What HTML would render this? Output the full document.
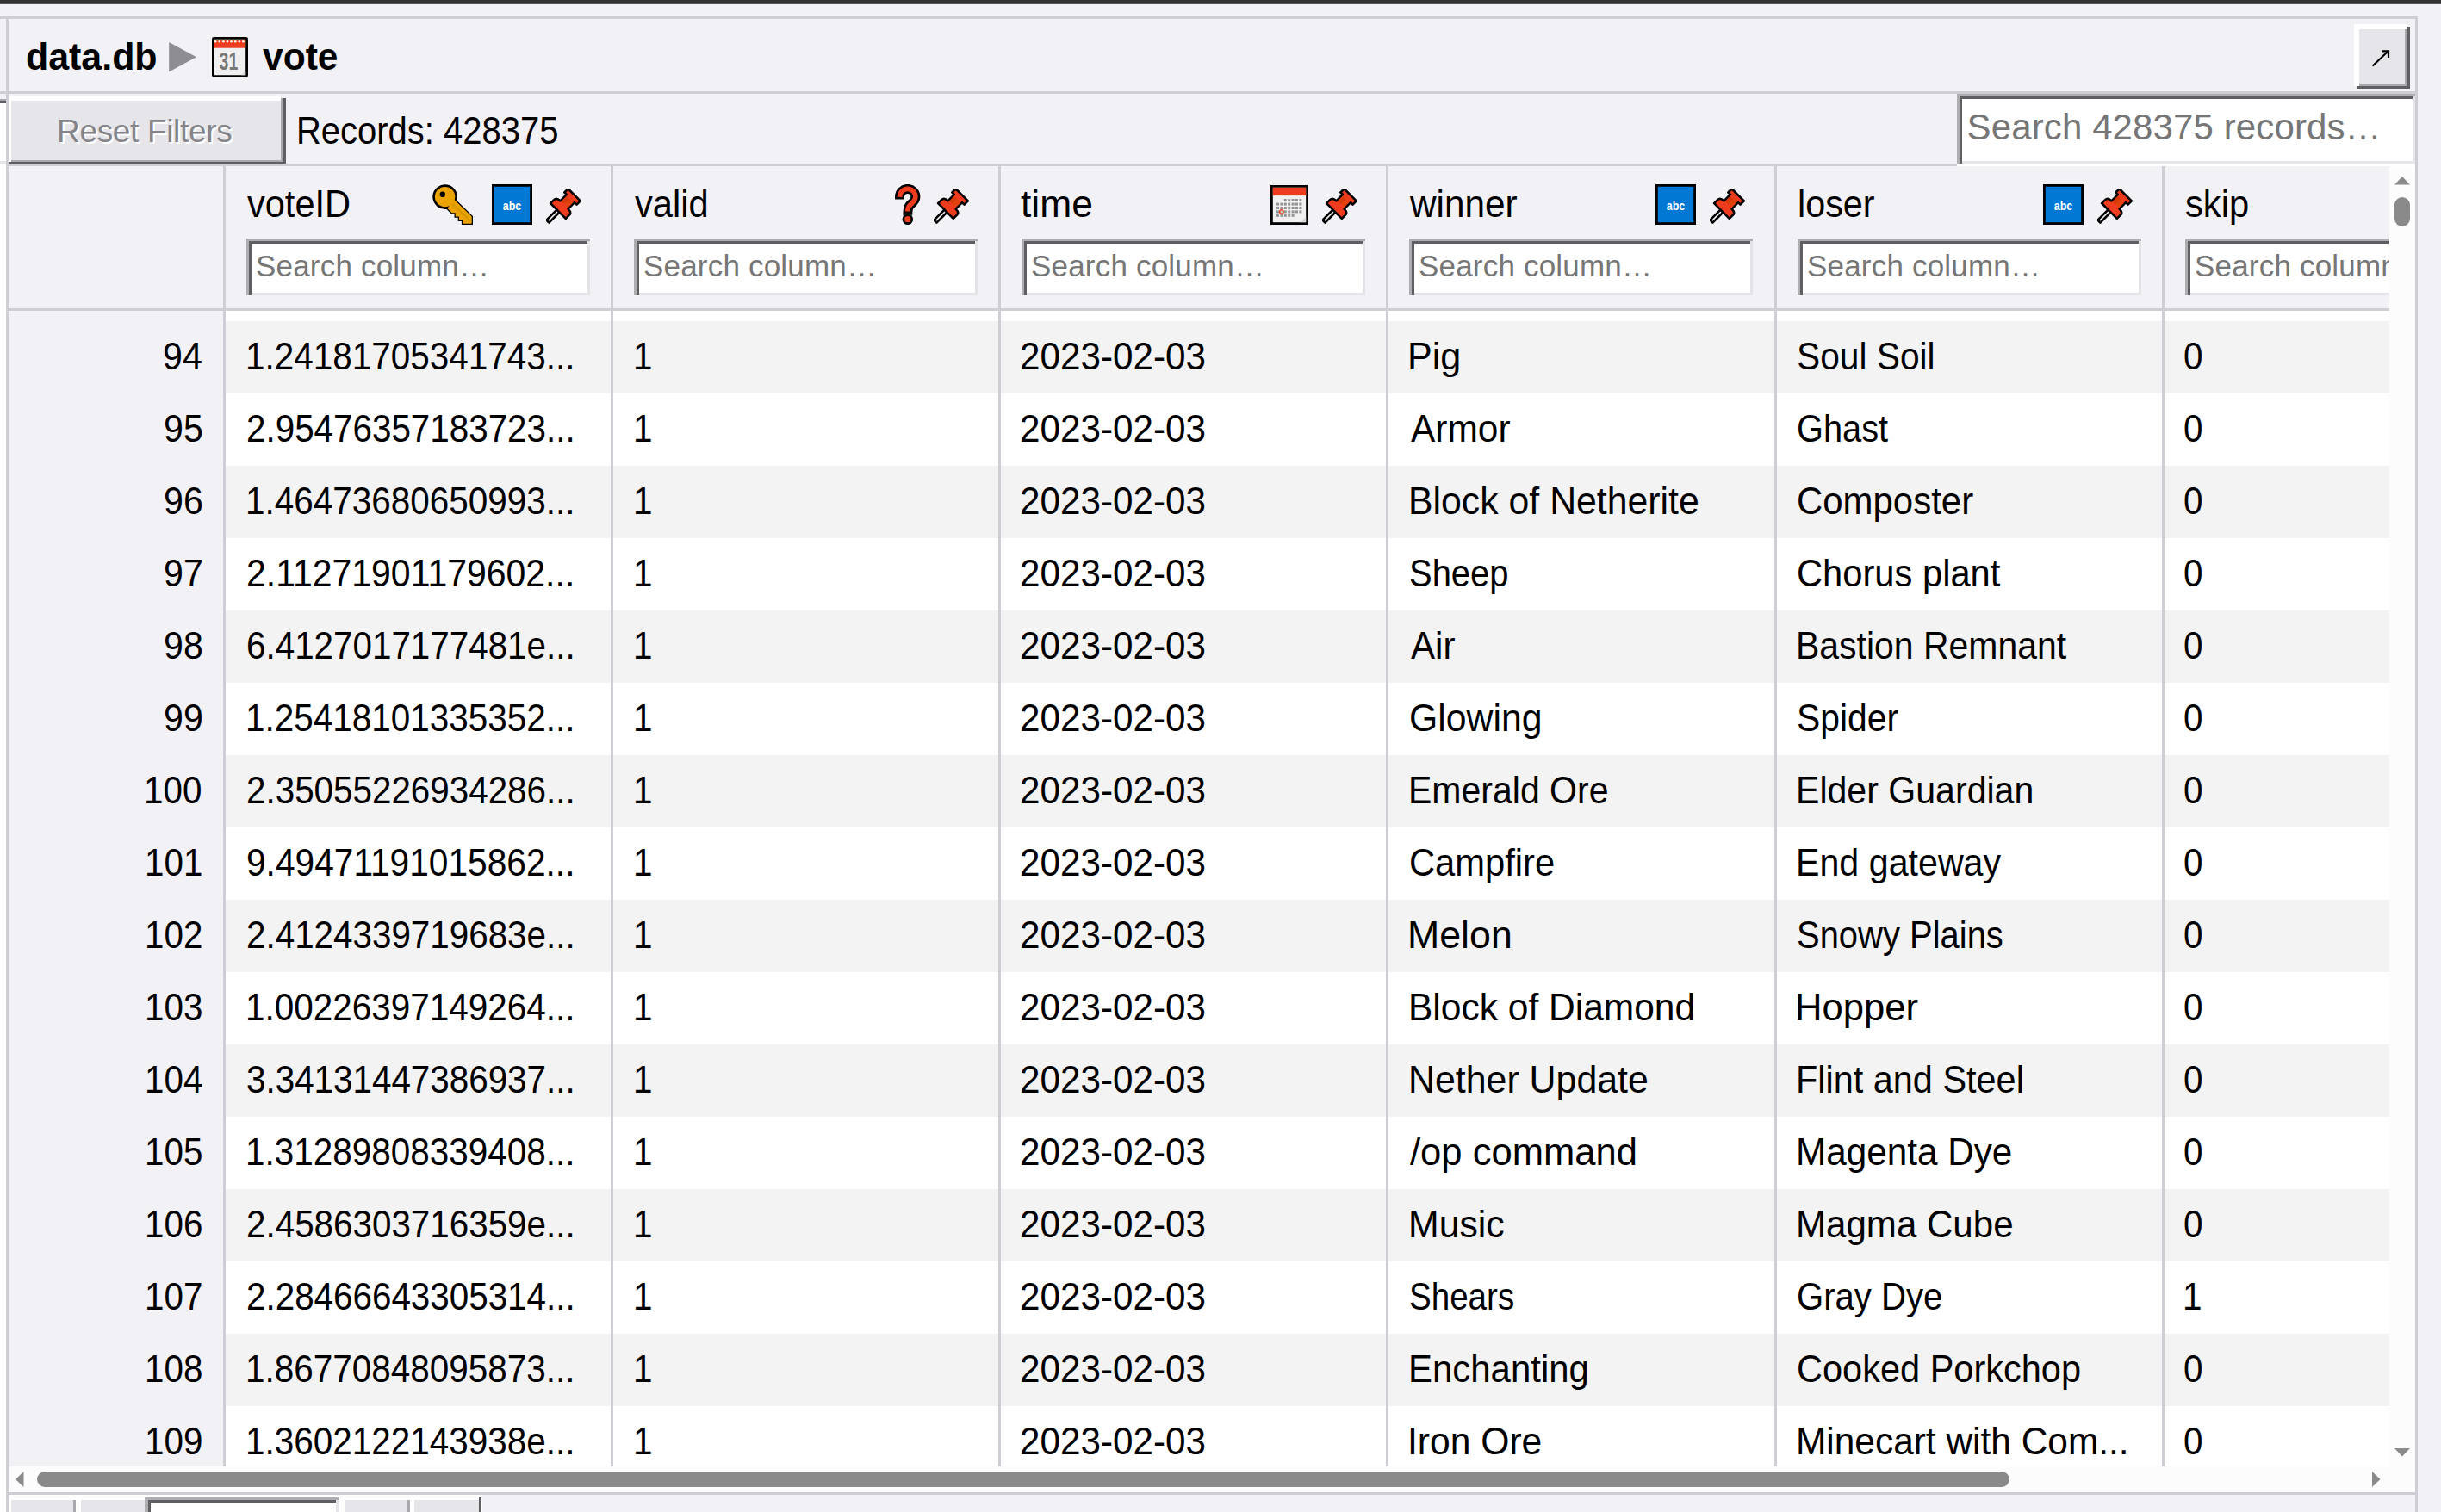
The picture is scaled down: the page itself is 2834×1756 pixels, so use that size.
<!DOCTYPE html>
<html><head><meta charset="utf-8"><title>vote</title>
<style>
html,body{margin:0;padding:0;}
body{width:2834px;height:1756px;overflow:hidden;background:#f2f1f6;position:relative;font-family:"Liberation Sans", sans-serif;}
body div{position:absolute;}
.t{white-space:pre;}
svg{display:block;}
</style></head><body>
<div style="left:0px;top:0px;width:2834px;height:4px;background:#333333;"></div>
<div style="left:0px;top:4px;width:2834px;height:1px;background:#5a5a5a;"></div>
<div style="left:0px;top:115px;width:7px;height:2px;background:#a9a8ad;"></div>
<div style="left:0px;top:117px;width:7px;height:3px;background:#5f5e63;"></div>
<div style="left:0px;top:120px;width:7px;height:1636px;background:#ffffff;"></div>
<div style="left:0px;top:187px;width:7px;height:3px;background:#e6e5ea;"></div>
<div style="left:0px;top:19px;width:2807px;height:3px;background:#cfced4;"></div>
<div style="left:7px;top:22px;width:3px;height:1734px;background:#cfced4;"></div>
<div style="left:2804px;top:19px;width:3px;height:1737px;background:#cfced4;"></div>
<div style="left:0px;top:106px;width:2804px;height:3px;background:#cfced4;"></div>
<div class="t" style="left:29.8px;top:44px;font-size:44px;line-height:44px;font-weight:700;color:#000;transform:scaleX(0.9752);transform-origin:0 0;">data.db</div>
<svg style="position:absolute;left:195px;top:48px" width="34" height="37" viewBox="0 0 34 37"><path d="M1.2 1 L33 18.3 L1.2 35.6 Z" fill="#8e8d93"/></svg>
<svg style="position:absolute;left:246px;top:43px" width="42" height="47" viewBox="0 0 42 47"><rect x="1.4" y="1.4" width="39.2" height="44.2" rx="1" fill="#f0f0f0" stroke="#000" stroke-width="2.8"/><rect x="2.8" y="3.4" width="36.4" height="9.3" fill="#f03c1e"/><circle cx="4.2" cy="5.2" r="1.3" fill="#fff"/><circle cx="8.8" cy="5.2" r="1.3" fill="#fff"/><circle cx="13.399999999999999" cy="5.2" r="1.3" fill="#fff"/><circle cx="18.0" cy="5.2" r="1.3" fill="#fff"/><circle cx="22.599999999999998" cy="5.2" r="1.3" fill="#fff"/><circle cx="27.2" cy="5.2" r="1.3" fill="#fff"/><circle cx="31.799999999999997" cy="5.2" r="1.3" fill="#fff"/><circle cx="36.4" cy="5.2" r="1.3" fill="#fff"/><text x="8.6" y="38.4" font-family="Liberation Sans" font-weight="700" font-size="29" fill="#787878" textLength="21.6" lengthAdjust="spacingAndGlyphs">31</text><path d="M39.2 39 L34 44.2 H39.2 Z" fill="#d8d8d8"/></svg>
<div class="t" style="left:304.8px;top:44px;font-size:44px;line-height:44px;font-weight:700;color:#000;transform:scaleX(0.9674);transform-origin:0 0;">vote</div>
<div style="left:2733px;top:28px;width:62px;height:72px;background:#ffffff;"></div>
<div style="left:2739px;top:34px;width:53px;height:63px;background:#e6e5ea;"></div>
<div style="left:2792px;top:34px;width:3px;height:66px;background:#a9a8ad;"></div>
<div style="left:2739px;top:97px;width:56px;height:3px;background:#a9a8ad;"></div>
<div style="left:2795px;top:31px;width:3px;height:72px;background:#5f5e63;"></div>
<div style="left:2736px;top:100px;width:62px;height:3px;background:#5f5e63;"></div>
<svg style="position:absolute;left:2750px;top:55px" width="28" height="26" viewBox="0 0 28 26"><path d="M5.2 21 L22.3 4.8" stroke="#000" stroke-width="2.2" stroke-linecap="round"/><path d="M15.5 4.3 H23 V12" fill="none" stroke="#000" stroke-width="2.2"/></svg>
<div style="left:10px;top:109px;width:2262px;height:81px;background:#f2f1f6;"></div>
<div style="left:10px;top:111px;width:316px;height:6px;background:#ffffff;"></div>
<div style="left:10px;top:111px;width:3px;height:79px;background:#ffffff;"></div>
<div style="left:13px;top:117px;width:313px;height:69px;background:#e6e5ea;"></div>
<div style="left:326px;top:114px;width:3px;height:75px;background:#a9a8ad;"></div>
<div style="left:13px;top:186px;width:316px;height:3px;background:#a9a8ad;"></div>
<div style="left:329px;top:114px;width:3px;height:77px;background:#5f5e63;"></div>
<div style="left:10px;top:188px;width:322px;height:3px;background:#5f5e63;"></div>
<div class="t" style="left:66.0px;top:134px;font-size:37px;line-height:37px;font-weight:400;color:#858589;letter-spacing:-0.333px;text-shadow:2.2px 2.2px 0 #ffffff;">Reset Filters</div>
<div class="t" style="left:343.7px;top:130px;font-size:44px;line-height:44px;font-weight:400;color:#000;transform:scaleX(0.9082);transform-origin:0 0;">Records: 428375</div>
<div style="left:2272px;top:109px;width:532px;height:81px;background:#aeadb2;"></div>
<div style="left:2275px;top:112px;width:529px;height:78px;background:#5f5e63;"></div>
<div style="left:2278px;top:115px;width:523px;height:72px;background:#ffffff;"></div>
<div style="left:2278px;top:187px;width:526px;height:3px;background:#e6e5ea;"></div>
<div style="left:2801px;top:112px;width:3px;height:78px;background:#e6e5ea;"></div>
<div style="left:2272px;top:190px;width:532px;height:3px;background:#ffffff;"></div>
<div class="t" style="left:2283.6px;top:127px;font-size:42px;line-height:42px;font-weight:400;color:#767676;letter-spacing:0.114px;">Search 428375 records…</div>
<div style="left:10px;top:190px;width:2262px;height:3px;background:#cfced4;"></div>
<div style="left:10px;top:193px;width:2764px;height:1510px;overflow:hidden;background:#fff">
<div style="left:0px;top:0px;width:2764px;height:165px;background:#f2f1f6;"></div>
<div style="left:0px;top:165px;width:2764px;height:3px;background:#cfced4;"></div>
<div style="left:0px;top:168px;width:2764px;height:12px;background:#ffffff;"></div>
<div style="left:0px;top:180px;width:2764px;height:84px;background:#f3f3f3;"></div>
<div style="left:0px;top:264px;width:2764px;height:84px;background:#ffffff;"></div>
<div style="left:0px;top:348px;width:2764px;height:84px;background:#f3f3f3;"></div>
<div style="left:0px;top:432px;width:2764px;height:84px;background:#ffffff;"></div>
<div style="left:0px;top:516px;width:2764px;height:84px;background:#f3f3f3;"></div>
<div style="left:0px;top:600px;width:2764px;height:84px;background:#ffffff;"></div>
<div style="left:0px;top:684px;width:2764px;height:84px;background:#f3f3f3;"></div>
<div style="left:0px;top:768px;width:2764px;height:84px;background:#ffffff;"></div>
<div style="left:0px;top:852px;width:2764px;height:84px;background:#f3f3f3;"></div>
<div style="left:0px;top:936px;width:2764px;height:84px;background:#ffffff;"></div>
<div style="left:0px;top:1020px;width:2764px;height:84px;background:#f3f3f3;"></div>
<div style="left:0px;top:1104px;width:2764px;height:84px;background:#ffffff;"></div>
<div style="left:0px;top:1188px;width:2764px;height:84px;background:#f3f3f3;"></div>
<div style="left:0px;top:1272px;width:2764px;height:84px;background:#ffffff;"></div>
<div style="left:0px;top:1356px;width:2764px;height:84px;background:#f3f3f3;"></div>
<div style="left:0px;top:1440px;width:2764px;height:84px;background:#ffffff;"></div>
<div style="left:0px;top:168px;width:249px;height:1342px;background:#f2f1f6;"></div>
<div style="left:249px;top:0px;width:3px;height:1510px;background:#cfced4;"></div>
<div style="left:699px;top:0px;width:3px;height:1510px;background:#cfced4;"></div>
<div style="left:1149px;top:0px;width:3px;height:1510px;background:#cfced4;"></div>
<div style="left:1599px;top:0px;width:3px;height:1510px;background:#cfced4;"></div>
<div style="left:2050px;top:0px;width:3px;height:1510px;background:#cfced4;"></div>
<div style="left:2500px;top:0px;width:3px;height:1510px;background:#cfced4;"></div>
<div class="t" style="left:179.0px;top:199px;font-size:44px;line-height:44px;font-weight:400;color:#000;transform:scaleX(0.9348);transform-origin:0 0;">94</div>
<div class="t" style="left:274.8px;top:199px;font-size:44px;line-height:44px;font-weight:400;color:#000;transform:scaleX(0.9198);transform-origin:0 0;">1.24181705341743...</div>
<div class="t" style="left:724.7px;top:199px;font-size:44px;line-height:44px;font-weight:400;color:#000;transform:scaleX(0.92);transform-origin:0 0;">1</div>
<div class="t" style="left:1174.0px;top:199px;font-size:44px;line-height:44px;font-weight:400;color:#000;transform:scaleX(0.9593);transform-origin:0 0;">2023-02-03</div>
<div class="t" style="left:1624.3px;top:199px;font-size:44px;line-height:44px;font-weight:400;color:#000;transform:scaleX(0.9807);transform-origin:0 0;">Pig</div>
<div class="t" style="left:2076.3px;top:199px;font-size:44px;line-height:44px;font-weight:400;color:#000;transform:scaleX(0.9249);transform-origin:0 0;">Soul Soil</div>
<div class="t" style="left:2524.8px;top:199px;font-size:44px;line-height:44px;font-weight:400;color:#000;transform:scaleX(0.92);transform-origin:0 0;">0</div>
<div class="t" style="left:180.0px;top:283px;font-size:44px;line-height:44px;font-weight:400;color:#000;transform:scaleX(0.9348);transform-origin:0 0;">95</div>
<div class="t" style="left:275.8px;top:283px;font-size:44px;line-height:44px;font-weight:400;color:#000;transform:scaleX(0.9176);transform-origin:0 0;">2.95476357183723...</div>
<div class="t" style="left:724.7px;top:283px;font-size:44px;line-height:44px;font-weight:400;color:#000;transform:scaleX(0.92);transform-origin:0 0;">1</div>
<div class="t" style="left:1174.0px;top:283px;font-size:44px;line-height:44px;font-weight:400;color:#000;transform:scaleX(0.9593);transform-origin:0 0;">2023-02-03</div>
<div class="t" style="left:1628.3px;top:283px;font-size:44px;line-height:44px;font-weight:400;color:#000;transform:scaleX(0.9647);transform-origin:0 0;">Armor</div>
<div class="t" style="left:2076.3px;top:283px;font-size:44px;line-height:44px;font-weight:400;color:#000;transform:scaleX(0.9035);transform-origin:0 0;">Ghast</div>
<div class="t" style="left:2524.8px;top:283px;font-size:44px;line-height:44px;font-weight:400;color:#000;transform:scaleX(0.92);transform-origin:0 0;">0</div>
<div class="t" style="left:180.0px;top:367px;font-size:44px;line-height:44px;font-weight:400;color:#000;transform:scaleX(0.9348);transform-origin:0 0;">96</div>
<div class="t" style="left:274.8px;top:367px;font-size:44px;line-height:44px;font-weight:400;color:#000;transform:scaleX(0.9198);transform-origin:0 0;">1.46473680650993...</div>
<div class="t" style="left:724.7px;top:367px;font-size:44px;line-height:44px;font-weight:400;color:#000;transform:scaleX(0.92);transform-origin:0 0;">1</div>
<div class="t" style="left:1174.0px;top:367px;font-size:44px;line-height:44px;font-weight:400;color:#000;transform:scaleX(0.9593);transform-origin:0 0;">2023-02-03</div>
<div class="t" style="left:1625.3px;top:367px;font-size:44px;line-height:44px;font-weight:400;color:#000;transform:scaleX(0.9727);transform-origin:0 0;">Block of Netherite</div>
<div class="t" style="left:2076.3px;top:367px;font-size:44px;line-height:44px;font-weight:400;color:#000;transform:scaleX(0.9531);transform-origin:0 0;">Composter</div>
<div class="t" style="left:2524.8px;top:367px;font-size:44px;line-height:44px;font-weight:400;color:#000;transform:scaleX(0.92);transform-origin:0 0;">0</div>
<div class="t" style="left:180.0px;top:451px;font-size:44px;line-height:44px;font-weight:400;color:#000;transform:scaleX(0.9348);transform-origin:0 0;">97</div>
<div class="t" style="left:275.8px;top:451px;font-size:44px;line-height:44px;font-weight:400;color:#000;transform:scaleX(0.9312);transform-origin:0 0;">2.11271901179602...</div>
<div class="t" style="left:724.7px;top:451px;font-size:44px;line-height:44px;font-weight:400;color:#000;transform:scaleX(0.92);transform-origin:0 0;">1</div>
<div class="t" style="left:1174.0px;top:451px;font-size:44px;line-height:44px;font-weight:400;color:#000;transform:scaleX(0.9593);transform-origin:0 0;">2023-02-03</div>
<div class="t" style="left:1626.3px;top:451px;font-size:44px;line-height:44px;font-weight:400;color:#000;transform:scaleX(0.9081);transform-origin:0 0;">Sheep</div>
<div class="t" style="left:2076.3px;top:451px;font-size:44px;line-height:44px;font-weight:400;color:#000;transform:scaleX(0.9474);transform-origin:0 0;">Chorus plant</div>
<div class="t" style="left:2524.8px;top:451px;font-size:44px;line-height:44px;font-weight:400;color:#000;transform:scaleX(0.92);transform-origin:0 0;">0</div>
<div class="t" style="left:180.0px;top:535px;font-size:44px;line-height:44px;font-weight:400;color:#000;transform:scaleX(0.9348);transform-origin:0 0;">98</div>
<div class="t" style="left:275.8px;top:535px;font-size:44px;line-height:44px;font-weight:400;color:#000;transform:scaleX(0.9176);transform-origin:0 0;">6.4127017177481e...</div>
<div class="t" style="left:724.7px;top:535px;font-size:44px;line-height:44px;font-weight:400;color:#000;transform:scaleX(0.92);transform-origin:0 0;">1</div>
<div class="t" style="left:1174.0px;top:535px;font-size:44px;line-height:44px;font-weight:400;color:#000;transform:scaleX(0.9593);transform-origin:0 0;">2023-02-03</div>
<div class="t" style="left:1628.3px;top:535px;font-size:44px;line-height:44px;font-weight:400;color:#000;transform:scaleX(0.9566);transform-origin:0 0;">Air</div>
<div class="t" style="left:2075.3px;top:535px;font-size:44px;line-height:44px;font-weight:400;color:#000;transform:scaleX(0.9306);transform-origin:0 0;">Bastion Remnant</div>
<div class="t" style="left:2524.8px;top:535px;font-size:44px;line-height:44px;font-weight:400;color:#000;transform:scaleX(0.92);transform-origin:0 0;">0</div>
<div class="t" style="left:180.0px;top:619px;font-size:44px;line-height:44px;font-weight:400;color:#000;transform:scaleX(0.9348);transform-origin:0 0;">99</div>
<div class="t" style="left:274.8px;top:619px;font-size:44px;line-height:44px;font-weight:400;color:#000;transform:scaleX(0.9198);transform-origin:0 0;">1.25418101335352...</div>
<div class="t" style="left:724.7px;top:619px;font-size:44px;line-height:44px;font-weight:400;color:#000;transform:scaleX(0.92);transform-origin:0 0;">1</div>
<div class="t" style="left:1174.0px;top:619px;font-size:44px;line-height:44px;font-weight:400;color:#000;transform:scaleX(0.9593);transform-origin:0 0;">2023-02-03</div>
<div class="t" style="left:1626.3px;top:619px;font-size:44px;line-height:44px;font-weight:400;color:#000;transform:scaleX(0.9721);transform-origin:0 0;">Glowing</div>
<div class="t" style="left:2076.3px;top:619px;font-size:44px;line-height:44px;font-weight:400;color:#000;transform:scaleX(0.9288);transform-origin:0 0;">Spider</div>
<div class="t" style="left:2524.8px;top:619px;font-size:44px;line-height:44px;font-weight:400;color:#000;transform:scaleX(0.92);transform-origin:0 0;">0</div>
<div class="t" style="left:157.0px;top:703px;font-size:44px;line-height:44px;font-weight:400;color:#000;transform:scaleX(0.9174);transform-origin:0 0;">100</div>
<div class="t" style="left:275.8px;top:703px;font-size:44px;line-height:44px;font-weight:400;color:#000;transform:scaleX(0.9176);transform-origin:0 0;">2.35055226934286...</div>
<div class="t" style="left:724.7px;top:703px;font-size:44px;line-height:44px;font-weight:400;color:#000;transform:scaleX(0.92);transform-origin:0 0;">1</div>
<div class="t" style="left:1174.0px;top:703px;font-size:44px;line-height:44px;font-weight:400;color:#000;transform:scaleX(0.9593);transform-origin:0 0;">2023-02-03</div>
<div class="t" style="left:1625.3px;top:703px;font-size:44px;line-height:44px;font-weight:400;color:#000;transform:scaleX(0.932);transform-origin:0 0;">Emerald Ore</div>
<div class="t" style="left:2075.3px;top:703px;font-size:44px;line-height:44px;font-weight:400;color:#000;transform:scaleX(0.9336);transform-origin:0 0;">Elder Guardian</div>
<div class="t" style="left:2524.8px;top:703px;font-size:44px;line-height:44px;font-weight:400;color:#000;transform:scaleX(0.92);transform-origin:0 0;">0</div>
<div class="t" style="left:158.0px;top:787px;font-size:44px;line-height:44px;font-weight:400;color:#000;transform:scaleX(0.9174);transform-origin:0 0;">101</div>
<div class="t" style="left:275.8px;top:787px;font-size:44px;line-height:44px;font-weight:400;color:#000;transform:scaleX(0.9243);transform-origin:0 0;">9.49471191015862...</div>
<div class="t" style="left:724.7px;top:787px;font-size:44px;line-height:44px;font-weight:400;color:#000;transform:scaleX(0.92);transform-origin:0 0;">1</div>
<div class="t" style="left:1174.0px;top:787px;font-size:44px;line-height:44px;font-weight:400;color:#000;transform:scaleX(0.9593);transform-origin:0 0;">2023-02-03</div>
<div class="t" style="left:1626.3px;top:787px;font-size:44px;line-height:44px;font-weight:400;color:#000;transform:scaleX(0.948);transform-origin:0 0;">Campfire</div>
<div class="t" style="left:2075.3px;top:787px;font-size:44px;line-height:44px;font-weight:400;color:#000;transform:scaleX(0.936);transform-origin:0 0;">End gateway</div>
<div class="t" style="left:2524.8px;top:787px;font-size:44px;line-height:44px;font-weight:400;color:#000;transform:scaleX(0.92);transform-origin:0 0;">0</div>
<div class="t" style="left:158.0px;top:871px;font-size:44px;line-height:44px;font-weight:400;color:#000;transform:scaleX(0.9174);transform-origin:0 0;">102</div>
<div class="t" style="left:275.8px;top:871px;font-size:44px;line-height:44px;font-weight:400;color:#000;transform:scaleX(0.9176);transform-origin:0 0;">2.4124339719683e...</div>
<div class="t" style="left:724.7px;top:871px;font-size:44px;line-height:44px;font-weight:400;color:#000;transform:scaleX(0.92);transform-origin:0 0;">1</div>
<div class="t" style="left:1174.0px;top:871px;font-size:44px;line-height:44px;font-weight:400;color:#000;transform:scaleX(0.9593);transform-origin:0 0;">2023-02-03</div>
<div class="t" style="left:1624.3px;top:871px;font-size:44px;line-height:44px;font-weight:400;color:#000;transform:scaleX(1.0159);transform-origin:0 0;">Melon</div>
<div class="t" style="left:2076.3px;top:871px;font-size:44px;line-height:44px;font-weight:400;color:#000;transform:scaleX(0.908);transform-origin:0 0;">Snowy Plains</div>
<div class="t" style="left:2524.8px;top:871px;font-size:44px;line-height:44px;font-weight:400;color:#000;transform:scaleX(0.92);transform-origin:0 0;">0</div>
<div class="t" style="left:158.0px;top:955px;font-size:44px;line-height:44px;font-weight:400;color:#000;transform:scaleX(0.9174);transform-origin:0 0;">103</div>
<div class="t" style="left:274.8px;top:955px;font-size:44px;line-height:44px;font-weight:400;color:#000;transform:scaleX(0.9198);transform-origin:0 0;">1.00226397149264...</div>
<div class="t" style="left:724.7px;top:955px;font-size:44px;line-height:44px;font-weight:400;color:#000;transform:scaleX(0.92);transform-origin:0 0;">1</div>
<div class="t" style="left:1174.0px;top:955px;font-size:44px;line-height:44px;font-weight:400;color:#000;transform:scaleX(0.9593);transform-origin:0 0;">2023-02-03</div>
<div class="t" style="left:1625.3px;top:955px;font-size:44px;line-height:44px;font-weight:400;color:#000;transform:scaleX(0.966);transform-origin:0 0;">Block of Diamond</div>
<div class="t" style="left:2074.3px;top:955px;font-size:44px;line-height:44px;font-weight:400;color:#000;transform:scaleX(0.9914);transform-origin:0 0;">Hopper</div>
<div class="t" style="left:2524.8px;top:955px;font-size:44px;line-height:44px;font-weight:400;color:#000;transform:scaleX(0.92);transform-origin:0 0;">0</div>
<div class="t" style="left:158.0px;top:1039px;font-size:44px;line-height:44px;font-weight:400;color:#000;transform:scaleX(0.9174);transform-origin:0 0;">104</div>
<div class="t" style="left:275.8px;top:1039px;font-size:44px;line-height:44px;font-weight:400;color:#000;transform:scaleX(0.9176);transform-origin:0 0;">3.34131447386937...</div>
<div class="t" style="left:724.7px;top:1039px;font-size:44px;line-height:44px;font-weight:400;color:#000;transform:scaleX(0.92);transform-origin:0 0;">1</div>
<div class="t" style="left:1174.0px;top:1039px;font-size:44px;line-height:44px;font-weight:400;color:#000;transform:scaleX(0.9593);transform-origin:0 0;">2023-02-03</div>
<div class="t" style="left:1625.3px;top:1039px;font-size:44px;line-height:44px;font-weight:400;color:#000;transform:scaleX(0.9743);transform-origin:0 0;">Nether Update</div>
<div class="t" style="left:2075.3px;top:1039px;font-size:44px;line-height:44px;font-weight:400;color:#000;transform:scaleX(0.9416);transform-origin:0 0;">Flint and Steel</div>
<div class="t" style="left:2524.8px;top:1039px;font-size:44px;line-height:44px;font-weight:400;color:#000;transform:scaleX(0.92);transform-origin:0 0;">0</div>
<div class="t" style="left:158.0px;top:1123px;font-size:44px;line-height:44px;font-weight:400;color:#000;transform:scaleX(0.9174);transform-origin:0 0;">105</div>
<div class="t" style="left:274.8px;top:1123px;font-size:44px;line-height:44px;font-weight:400;color:#000;transform:scaleX(0.9198);transform-origin:0 0;">1.31289808339408...</div>
<div class="t" style="left:724.7px;top:1123px;font-size:44px;line-height:44px;font-weight:400;color:#000;transform:scaleX(0.92);transform-origin:0 0;">1</div>
<div class="t" style="left:1174.0px;top:1123px;font-size:44px;line-height:44px;font-weight:400;color:#000;transform:scaleX(0.9593);transform-origin:0 0;">2023-02-03</div>
<div class="t" style="left:1626.6px;top:1123px;font-size:44px;line-height:44px;font-weight:400;color:#000;transform:scaleX(0.9902);transform-origin:0 0;">/op command</div>
<div class="t" style="left:2075.3px;top:1123px;font-size:44px;line-height:44px;font-weight:400;color:#000;transform:scaleX(0.9602);transform-origin:0 0;">Magenta Dye</div>
<div class="t" style="left:2524.8px;top:1123px;font-size:44px;line-height:44px;font-weight:400;color:#000;transform:scaleX(0.92);transform-origin:0 0;">0</div>
<div class="t" style="left:158.0px;top:1207px;font-size:44px;line-height:44px;font-weight:400;color:#000;transform:scaleX(0.9174);transform-origin:0 0;">106</div>
<div class="t" style="left:275.8px;top:1207px;font-size:44px;line-height:44px;font-weight:400;color:#000;transform:scaleX(0.9176);transform-origin:0 0;">2.4586303716359e...</div>
<div class="t" style="left:724.7px;top:1207px;font-size:44px;line-height:44px;font-weight:400;color:#000;transform:scaleX(0.92);transform-origin:0 0;">1</div>
<div class="t" style="left:1174.0px;top:1207px;font-size:44px;line-height:44px;font-weight:400;color:#000;transform:scaleX(0.9593);transform-origin:0 0;">2023-02-03</div>
<div class="t" style="left:1625.3px;top:1207px;font-size:44px;line-height:44px;font-weight:400;color:#000;transform:scaleX(0.9727);transform-origin:0 0;">Music</div>
<div class="t" style="left:2075.3px;top:1207px;font-size:44px;line-height:44px;font-weight:400;color:#000;transform:scaleX(0.9562);transform-origin:0 0;">Magma Cube</div>
<div class="t" style="left:2524.8px;top:1207px;font-size:44px;line-height:44px;font-weight:400;color:#000;transform:scaleX(0.92);transform-origin:0 0;">0</div>
<div class="t" style="left:158.0px;top:1291px;font-size:44px;line-height:44px;font-weight:400;color:#000;transform:scaleX(0.9174);transform-origin:0 0;">107</div>
<div class="t" style="left:275.8px;top:1291px;font-size:44px;line-height:44px;font-weight:400;color:#000;transform:scaleX(0.9176);transform-origin:0 0;">2.28466643305314...</div>
<div class="t" style="left:724.7px;top:1291px;font-size:44px;line-height:44px;font-weight:400;color:#000;transform:scaleX(0.92);transform-origin:0 0;">1</div>
<div class="t" style="left:1174.0px;top:1291px;font-size:44px;line-height:44px;font-weight:400;color:#000;transform:scaleX(0.9593);transform-origin:0 0;">2023-02-03</div>
<div class="t" style="left:1626.3px;top:1291px;font-size:44px;line-height:44px;font-weight:400;color:#000;transform:scaleX(0.8765);transform-origin:0 0;">Shears</div>
<div class="t" style="left:2076.3px;top:1291px;font-size:44px;line-height:44px;font-weight:400;color:#000;transform:scaleX(0.9115);transform-origin:0 0;">Gray Dye</div>
<div class="t" style="left:2523.5px;top:1291px;font-size:44px;line-height:44px;font-weight:400;color:#000;transform:scaleX(0.92);transform-origin:0 0;">1</div>
<div class="t" style="left:158.0px;top:1375px;font-size:44px;line-height:44px;font-weight:400;color:#000;transform:scaleX(0.9174);transform-origin:0 0;">108</div>
<div class="t" style="left:274.8px;top:1375px;font-size:44px;line-height:44px;font-weight:400;color:#000;transform:scaleX(0.9198);transform-origin:0 0;">1.86770848095873...</div>
<div class="t" style="left:724.7px;top:1375px;font-size:44px;line-height:44px;font-weight:400;color:#000;transform:scaleX(0.92);transform-origin:0 0;">1</div>
<div class="t" style="left:1174.0px;top:1375px;font-size:44px;line-height:44px;font-weight:400;color:#000;transform:scaleX(0.9593);transform-origin:0 0;">2023-02-03</div>
<div class="t" style="left:1625.3px;top:1375px;font-size:44px;line-height:44px;font-weight:400;color:#000;transform:scaleX(0.9531);transform-origin:0 0;">Enchanting</div>
<div class="t" style="left:2076.3px;top:1375px;font-size:44px;line-height:44px;font-weight:400;color:#000;transform:scaleX(0.9436);transform-origin:0 0;">Cooked Porkchop</div>
<div class="t" style="left:2524.8px;top:1375px;font-size:44px;line-height:44px;font-weight:400;color:#000;transform:scaleX(0.92);transform-origin:0 0;">0</div>
<div class="t" style="left:158.0px;top:1459px;font-size:44px;line-height:44px;font-weight:400;color:#000;transform:scaleX(0.9174);transform-origin:0 0;">109</div>
<div class="t" style="left:274.8px;top:1459px;font-size:44px;line-height:44px;font-weight:400;color:#000;transform:scaleX(0.9198);transform-origin:0 0;">1.3602122143938e...</div>
<div class="t" style="left:724.7px;top:1459px;font-size:44px;line-height:44px;font-weight:400;color:#000;transform:scaleX(0.92);transform-origin:0 0;">1</div>
<div class="t" style="left:1174.0px;top:1459px;font-size:44px;line-height:44px;font-weight:400;color:#000;transform:scaleX(0.9593);transform-origin:0 0;">2023-02-03</div>
<div class="t" style="left:1624.3px;top:1459px;font-size:44px;line-height:44px;font-weight:400;color:#000;transform:scaleX(0.9686);transform-origin:0 0;">Iron Ore</div>
<div class="t" style="left:2075.3px;top:1459px;font-size:44px;line-height:44px;font-weight:400;color:#000;transform:scaleX(0.9641);transform-origin:0 0;">Minecart with Com...</div>
<div class="t" style="left:2524.8px;top:1459px;font-size:44px;line-height:44px;font-weight:400;color:#000;transform:scaleX(0.92);transform-origin:0 0;">0</div>
<div class="t" style="left:277.0px;top:22px;font-size:44px;line-height:44px;font-weight:400;color:#000;transform:scaleX(0.944);transform-origin:0 0;">voteID</div>
<div style="left:276px;top:84px;width:399px;height:66px;background:#aeadb2;"></div>
<div style="left:279px;top:87px;width:396px;height:63px;background:#5f5e63;"></div>
<div style="left:282px;top:90px;width:390px;height:57px;background:#ffffff;"></div>
<div style="left:282px;top:147px;width:393px;height:3px;background:#e3e2e7;"></div>
<div style="left:672px;top:87px;width:3px;height:63px;background:#e3e2e7;"></div>
<div class="t" style="left:287.0px;top:98px;font-size:35px;line-height:35px;font-weight:400;color:#767676;letter-spacing:0.192px;">Search column…</div>
<div class="t" style="left:726.7px;top:22px;font-size:44px;line-height:44px;font-weight:400;color:#000;transform:scaleX(0.9466);transform-origin:0 0;">valid</div>
<div style="left:726px;top:84px;width:399px;height:66px;background:#aeadb2;"></div>
<div style="left:729px;top:87px;width:396px;height:63px;background:#5f5e63;"></div>
<div style="left:732px;top:90px;width:390px;height:57px;background:#ffffff;"></div>
<div style="left:732px;top:147px;width:393px;height:3px;background:#e3e2e7;"></div>
<div style="left:1122px;top:87px;width:3px;height:63px;background:#e3e2e7;"></div>
<div class="t" style="left:737.0px;top:98px;font-size:35px;line-height:35px;font-weight:400;color:#767676;letter-spacing:0.192px;">Search column…</div>
<div class="t" style="left:1175.4px;top:22px;font-size:44px;line-height:44px;font-weight:400;color:#000;transform:scaleX(1.0087);transform-origin:0 0;">time</div>
<div style="left:1176px;top:84px;width:399px;height:66px;background:#aeadb2;"></div>
<div style="left:1179px;top:87px;width:396px;height:63px;background:#5f5e63;"></div>
<div style="left:1182px;top:90px;width:390px;height:57px;background:#ffffff;"></div>
<div style="left:1182px;top:147px;width:393px;height:3px;background:#e3e2e7;"></div>
<div style="left:1572px;top:87px;width:3px;height:63px;background:#e3e2e7;"></div>
<div class="t" style="left:1187.0px;top:98px;font-size:35px;line-height:35px;font-weight:400;color:#767676;letter-spacing:0.192px;">Search column…</div>
<div class="t" style="left:1627.2px;top:22px;font-size:44px;line-height:44px;font-weight:400;color:#000;transform:scaleX(0.962);transform-origin:0 0;">winner</div>
<div style="left:1626px;top:84px;width:399px;height:66px;background:#aeadb2;"></div>
<div style="left:1629px;top:87px;width:396px;height:63px;background:#5f5e63;"></div>
<div style="left:1632px;top:90px;width:390px;height:57px;background:#ffffff;"></div>
<div style="left:1632px;top:147px;width:393px;height:3px;background:#e3e2e7;"></div>
<div style="left:2022px;top:87px;width:3px;height:63px;background:#e3e2e7;"></div>
<div class="t" style="left:1637.0px;top:98px;font-size:35px;line-height:35px;font-weight:400;color:#767676;letter-spacing:0.192px;">Search column…</div>
<div class="t" style="left:2076.7px;top:22px;font-size:44px;line-height:44px;font-weight:400;color:#000;transform:scaleX(0.9391);transform-origin:0 0;">loser</div>
<div style="left:2077px;top:84px;width:399px;height:66px;background:#aeadb2;"></div>
<div style="left:2080px;top:87px;width:396px;height:63px;background:#5f5e63;"></div>
<div style="left:2083px;top:90px;width:390px;height:57px;background:#ffffff;"></div>
<div style="left:2083px;top:147px;width:393px;height:3px;background:#e3e2e7;"></div>
<div style="left:2473px;top:87px;width:3px;height:63px;background:#e3e2e7;"></div>
<div class="t" style="left:2088.0px;top:98px;font-size:35px;line-height:35px;font-weight:400;color:#767676;letter-spacing:0.192px;">Search column…</div>
<div class="t" style="left:2527.0px;top:22px;font-size:44px;line-height:44px;font-weight:400;color:#000;transform:scaleX(0.9467);transform-origin:0 0;">skip</div>
<div style="left:2527px;top:84px;width:399px;height:66px;background:#aeadb2;"></div>
<div style="left:2530px;top:87px;width:396px;height:63px;background:#5f5e63;"></div>
<div style="left:2533px;top:90px;width:390px;height:57px;background:#ffffff;"></div>
<div style="left:2533px;top:147px;width:393px;height:3px;background:#e3e2e7;"></div>
<div style="left:2923px;top:87px;width:3px;height:63px;background:#e3e2e7;"></div>
<div class="t" style="left:2538.0px;top:98px;font-size:35px;line-height:35px;font-weight:400;color:#767676;letter-spacing:0.192px;">Search column…</div>
</div>
<svg style="position:absolute;left:502px;top:214px" width="47" height="47" viewBox="0 0 47 47"><path d="M25 17.5 L45.7 37.5 V45.7 H35.2 V41.6 H31 V37.4 H26.8 V33.2 H22.6 L17.5 28 Z" fill="#000" stroke="#000" stroke-width="2.6" stroke-linejoin="miter"/><circle cx="14.6" cy="14.6" r="14.3" fill="#000"/><path d="M25 17.5 L45.7 37.5 V45.7 H35.2 V41.6 H31 V37.4 H26.8 V33.2 H22.6 L17.5 28 Z" fill="#eaa300"/><circle cx="14.6" cy="14.6" r="11.7" fill="#eaa300"/><path d="M24 22 L43.5 40.5 V44 L22 23.5 Z" fill="#cf9000" opacity="0.6"/><circle cx="11.8" cy="11.8" r="3.2" fill="#000"/></svg>
<svg style="position:absolute;left:571px;top:214px" width="47" height="47" viewBox="0 0 47 47"><rect x="1.4" y="1.4" width="44.2" height="44.2" fill="#0078d4" stroke="#000" stroke-width="2.8"/><text x="23.5" y="29.5" text-anchor="middle" font-family="Liberation Sans" font-weight="700" font-size="14.5" fill="#fff" textLength="21.5" lengthAdjust="spacingAndGlyphs">abc</text></svg>
<svg style="position:absolute;left:634px;top:219px" width="41" height="41" viewBox="0 0 41 41"><g transform="translate(17.5 22.5) rotate(45)" stroke="#000" stroke-width="2.6" stroke-linejoin="round"><rect x="-2.1" y="5" width="4.2" height="17" fill="#f4f4f4"/><path d="M-10 -21.5 H10 V-15.5 H6.5 V-5 Q12.5 -5 12.5 -1 V5 H-12.5 V-1 Q-12.5 -5 -6.5 -5 V-15.5 H-10 Z" fill="#f03c1e"/></g><g transform="translate(17.5 22.5) rotate(45)"><rect x="-5.2" y="-14.2" width="5" height="8" fill="#d43a0a"/><rect x="-0.2" y="-14.2" width="5.4" height="8" fill="#e2410f"/></g></svg>
<svg style="position:absolute;left:1039px;top:214px" width="30" height="47" viewBox="0 0 30 47"><path d="M5.5 17.4 V14.6 A9.2 9.2 0 0 1 23.9 14.6 C23.9 19.8 20 21.6 17.6 24 C15.6 26 14.8 28 14.8 35.8" fill="none" stroke="#000" stroke-width="11"/><path d="M5.5 14.8 V14.6 A9.2 9.2 0 0 1 23.9 14.6 C23.9 19.8 20 21.6 17.6 24 C15.6 26 14.8 28 14.8 31.5" fill="none" stroke="#f03c1e" stroke-width="5.6"/><rect x="5.5" y="14" width="2.9" height="0.9" fill="#f03c1e"/><circle cx="14.8" cy="40.7" r="6.3" fill="#000"/><circle cx="14.8" cy="40.7" r="3.6" fill="#f03c1e"/></svg>
<svg style="position:absolute;left:1084px;top:219px" width="41" height="41" viewBox="0 0 41 41"><g transform="translate(17.5 22.5) rotate(45)" stroke="#000" stroke-width="2.6" stroke-linejoin="round"><rect x="-2.1" y="5" width="4.2" height="17" fill="#f4f4f4"/><path d="M-10 -21.5 H10 V-15.5 H6.5 V-5 Q12.5 -5 12.5 -1 V5 H-12.5 V-1 Q-12.5 -5 -6.5 -5 V-15.5 H-10 Z" fill="#f03c1e"/></g><g transform="translate(17.5 22.5) rotate(45)"><rect x="-5.2" y="-14.2" width="5" height="8" fill="#d43a0a"/><rect x="-0.2" y="-14.2" width="5.4" height="8" fill="#e2410f"/></g></svg>
<svg style="position:absolute;left:1475px;top:215px" width="44" height="46" viewBox="0 0 44 46"><rect x="1.4" y="1.4" width="41.2" height="43.2" fill="#f0f0f0" stroke="#000" stroke-width="2.8"/><rect x="2.8" y="2.8" width="38.4" height="9.3" fill="#f03c1e"/><rect x="15.8" y="16.0" width="3" height="3" fill="#949494"/><rect x="20.2" y="16.0" width="3" height="3" fill="#949494"/><rect x="24.6" y="16.0" width="3" height="3" fill="#949494"/><rect x="29.0" y="16.0" width="3" height="3" fill="#949494"/><rect x="33.4" y="16.0" width="3" height="3" fill="#949494"/><rect x="7.0" y="20.6" width="3" height="3" fill="#949494"/><rect x="11.4" y="20.6" width="3" height="3" fill="#949494"/><rect x="15.8" y="20.6" width="3" height="3" fill="#949494"/><rect x="20.2" y="20.6" width="3" height="3" fill="#949494"/><rect x="24.6" y="20.6" width="3" height="3" fill="#949494"/><rect x="29.0" y="20.6" width="3" height="3" fill="#949494"/><rect x="33.4" y="20.6" width="3" height="3" fill="#949494"/><rect x="7.0" y="25.0" width="3" height="3" fill="#949494"/><rect x="11.4" y="25.0" width="3" height="3" fill="#949494"/><rect x="15.8" y="25.0" width="3" height="3" fill="#949494"/><rect x="20.2" y="25.0" width="3" height="3" fill="#949494"/><rect x="24.6" y="25.0" width="3" height="3" fill="#949494"/><rect x="29.0" y="25.0" width="3" height="3" fill="#949494"/><rect x="33.4" y="25.0" width="3" height="3" fill="#949494"/><rect x="7.0" y="29.400000000000002" width="3" height="3" fill="#949494"/><rect x="11.4" y="29.400000000000002" width="3" height="3" fill="#949494"/><rect x="15.8" y="29.400000000000002" width="3" height="3" fill="#949494"/><rect x="20.2" y="29.400000000000002" width="3" height="3" fill="#949494"/><rect x="24.6" y="29.400000000000002" width="3" height="3" fill="#949494"/><rect x="29.0" y="29.400000000000002" width="3" height="3" fill="#949494"/><rect x="33.4" y="29.400000000000002" width="3" height="3" fill="#949494"/><rect x="7.0" y="33.8" width="3" height="3" fill="#949494"/><rect x="11.4" y="33.8" width="3" height="3" fill="#949494"/><rect x="15.8" y="33.8" width="3" height="3" fill="#949494"/><rect x="20.2" y="33.8" width="3" height="3" fill="#949494"/><rect x="24.6" y="33.8" width="3" height="3" fill="#949494"/><circle cx="12.9" cy="30.9" r="2.3" fill="#c8c8c8" stroke="#f03c1e" stroke-width="1.3"/><path d="M41.2 37 L35 43.2 H41.2 Z" fill="#d8d8d8"/></svg>
<svg style="position:absolute;left:1535px;top:219px" width="41" height="41" viewBox="0 0 41 41"><g transform="translate(17.5 22.5) rotate(45)" stroke="#000" stroke-width="2.6" stroke-linejoin="round"><rect x="-2.1" y="5" width="4.2" height="17" fill="#f4f4f4"/><path d="M-10 -21.5 H10 V-15.5 H6.5 V-5 Q12.5 -5 12.5 -1 V5 H-12.5 V-1 Q-12.5 -5 -6.5 -5 V-15.5 H-10 Z" fill="#f03c1e"/></g><g transform="translate(17.5 22.5) rotate(45)"><rect x="-5.2" y="-14.2" width="5" height="8" fill="#d43a0a"/><rect x="-0.2" y="-14.2" width="5.4" height="8" fill="#e2410f"/></g></svg>
<svg style="position:absolute;left:1922px;top:214px" width="47" height="47" viewBox="0 0 47 47"><rect x="1.4" y="1.4" width="44.2" height="44.2" fill="#0078d4" stroke="#000" stroke-width="2.8"/><text x="23.5" y="29.5" text-anchor="middle" font-family="Liberation Sans" font-weight="700" font-size="14.5" fill="#fff" textLength="21.5" lengthAdjust="spacingAndGlyphs">abc</text></svg>
<svg style="position:absolute;left:1985px;top:219px" width="41" height="41" viewBox="0 0 41 41"><g transform="translate(17.5 22.5) rotate(45)" stroke="#000" stroke-width="2.6" stroke-linejoin="round"><rect x="-2.1" y="5" width="4.2" height="17" fill="#f4f4f4"/><path d="M-10 -21.5 H10 V-15.5 H6.5 V-5 Q12.5 -5 12.5 -1 V5 H-12.5 V-1 Q-12.5 -5 -6.5 -5 V-15.5 H-10 Z" fill="#f03c1e"/></g><g transform="translate(17.5 22.5) rotate(45)"><rect x="-5.2" y="-14.2" width="5" height="8" fill="#d43a0a"/><rect x="-0.2" y="-14.2" width="5.4" height="8" fill="#e2410f"/></g></svg>
<svg style="position:absolute;left:2372px;top:214px" width="47" height="47" viewBox="0 0 47 47"><rect x="1.4" y="1.4" width="44.2" height="44.2" fill="#0078d4" stroke="#000" stroke-width="2.8"/><text x="23.5" y="29.5" text-anchor="middle" font-family="Liberation Sans" font-weight="700" font-size="14.5" fill="#fff" textLength="21.5" lengthAdjust="spacingAndGlyphs">abc</text></svg>
<svg style="position:absolute;left:2435px;top:219px" width="41" height="41" viewBox="0 0 41 41"><g transform="translate(17.5 22.5) rotate(45)" stroke="#000" stroke-width="2.6" stroke-linejoin="round"><rect x="-2.1" y="5" width="4.2" height="17" fill="#f4f4f4"/><path d="M-10 -21.5 H10 V-15.5 H6.5 V-5 Q12.5 -5 12.5 -1 V5 H-12.5 V-1 Q-12.5 -5 -6.5 -5 V-15.5 H-10 Z" fill="#f03c1e"/></g><g transform="translate(17.5 22.5) rotate(45)"><rect x="-5.2" y="-14.2" width="5" height="8" fill="#d43a0a"/><rect x="-0.2" y="-14.2" width="5.4" height="8" fill="#e2410f"/></g></svg>
<div style="left:2774px;top:193px;width:30px;height:1510px;background:#fcfcfc;"></div>
<svg style="position:absolute;left:2779px;top:204px" width="20" height="11" viewBox="0 0 20 11"><path d="M1 10.5 L10 1 L19 10.5 Z" fill="#8a8a8a"/></svg>
<div style="left:2780px;top:229px;width:18px;height:34px;background:#8a8a8a;border-radius:9px;"></div>
<svg style="position:absolute;left:2779px;top:1681px" width="20" height="11" viewBox="0 0 20 11"><path d="M1 1 L10 10.5 L19 1 Z" fill="#8a8a8a"/></svg>
<div style="left:10px;top:1703px;width:2794px;height:30px;background:#fcfcfc;"></div>
<svg style="position:absolute;left:17px;top:1708px" width="11" height="20" viewBox="0 0 11 20"><path d="M10.5 1 L1 10 L10.5 19 Z" fill="#8a8a8a"/></svg>
<div style="left:43px;top:1709px;width:2290px;height:18px;background:#8a8a8a;border-radius:9px;"></div>
<svg style="position:absolute;left:2753px;top:1708px" width="11" height="20" viewBox="0 0 11 20"><path d="M1 1 L10.5 10 L1 19 Z" fill="#8a8a8a"/></svg>
<div style="left:10px;top:1733px;width:2794px;height:3px;background:#cfced4;"></div>
<div style="left:10px;top:1736px;width:550px;height:20px;background:#ffffff;"></div>
<div style="left:13px;top:1742px;width:72px;height:14px;background:#e6e5ea;"></div>
<div style="left:85px;top:1742px;width:3px;height:14px;background:#a9a8ad;"></div>
<div style="left:94px;top:1742px;width:74px;height:14px;background:#e6e5ea;"></div>
<div style="left:168px;top:1738px;width:226px;height:18px;background:#aeadb2;"></div>
<div style="left:172px;top:1742px;width:218px;height:14px;background:#5f5e63;"></div>
<div style="left:175px;top:1745px;width:215px;height:11px;background:#ffffff;"></div>
<div style="left:390px;top:1742px;width:4px;height:14px;background:#e6e5ea;"></div>
<div style="left:400px;top:1742px;width:73px;height:14px;background:#e6e5ea;"></div>
<div style="left:473px;top:1742px;width:3px;height:14px;background:#a9a8ad;"></div>
<div style="left:481px;top:1742px;width:75px;height:14px;background:#e6e5ea;"></div>
<div style="left:556px;top:1739px;width:3px;height:17px;background:#5f5e63;"></div>
</body></html>
